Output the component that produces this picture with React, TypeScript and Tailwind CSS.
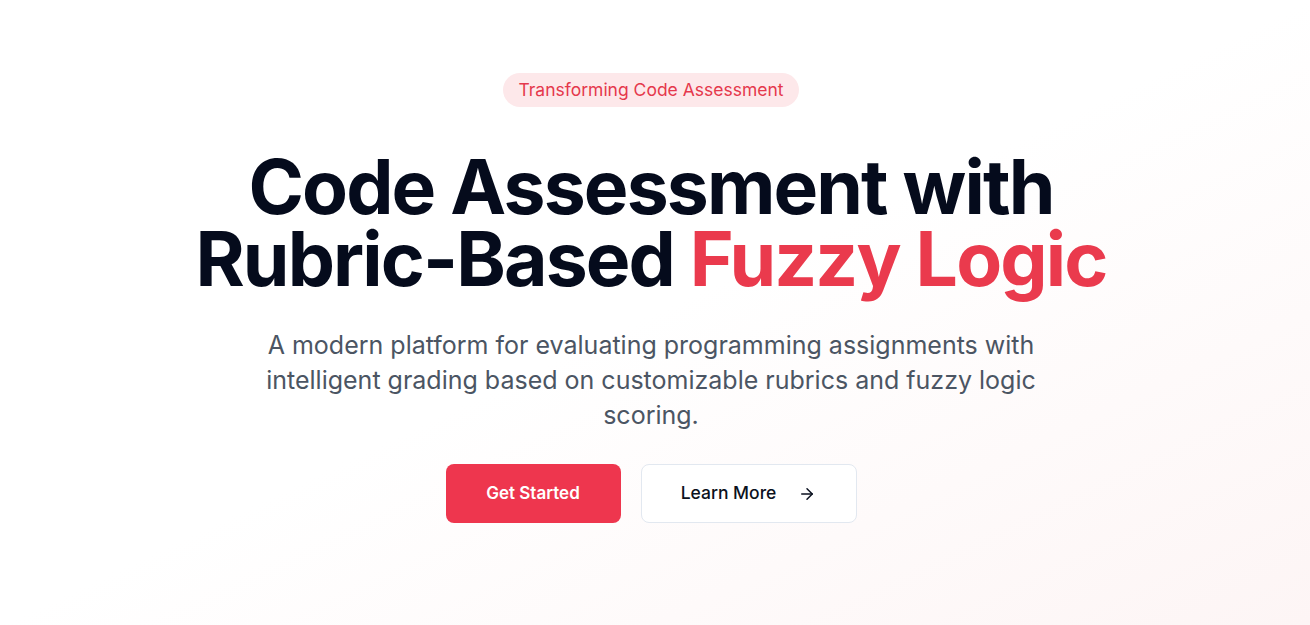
import React from 'react';
import { ArrowRight } from 'lucide-react';

function Hero() {
  return (
    <section className="min-h-[625px] w-full bg-gradient-to-br from-white via-white to-[#fdf5f5] pr-2">
      <div className="mx-auto flex max-w-6xl flex-col items-center px-6 pt-[73px] text-center">
        <span className="rounded-full bg-[#fde8ea] px-[15px] py-[3px] text-[17.5px] leading-[28px] text-[#e5384c]">
          Transforming Code Assessment
        </span>
        <h1 className="mt-[44px] text-[75px] font-bold leading-[72px] tracking-tight text-[#050b1c]">
          Code Assessment with
          <br />
          Rubric-Based <span className="text-[#ea3a4d]">Fuzzy Logic</span>
        </h1>
        <p className="mt-[33px] max-w-[800px] text-[25px] leading-[35px] text-[#4b5563]">
          A modern platform for evaluating programming assignments with
          intelligent grading based on customizable rubrics and fuzzy logic
          scoring.
        </p>
        <div className="mt-[31px] flex items-center gap-5">
          <button
            type={'button'}
            className="h-[59px] w-[175px] rounded-lg bg-[#ee364e] text-[17px] font-semibold text-white"
          >
            Get Started
          </button>
          <button
            type={'button'}
            className="flex h-[59px] w-[216px] items-center justify-center gap-[22px] rounded-lg border border-[#e2e8f0] bg-white text-[17.5px] font-medium text-[#0b1120]"
          >
            Learn More
            <ArrowRight size={18} strokeWidth={2} />
          </button>
        </div>
      </div>
    </section>
  );
}

export default function App() {
  return (
    <div style={{ fontFamily: 'Inter, "Noto Sans", sans-serif' }}>
      <Hero />
    </div>
  );
}
